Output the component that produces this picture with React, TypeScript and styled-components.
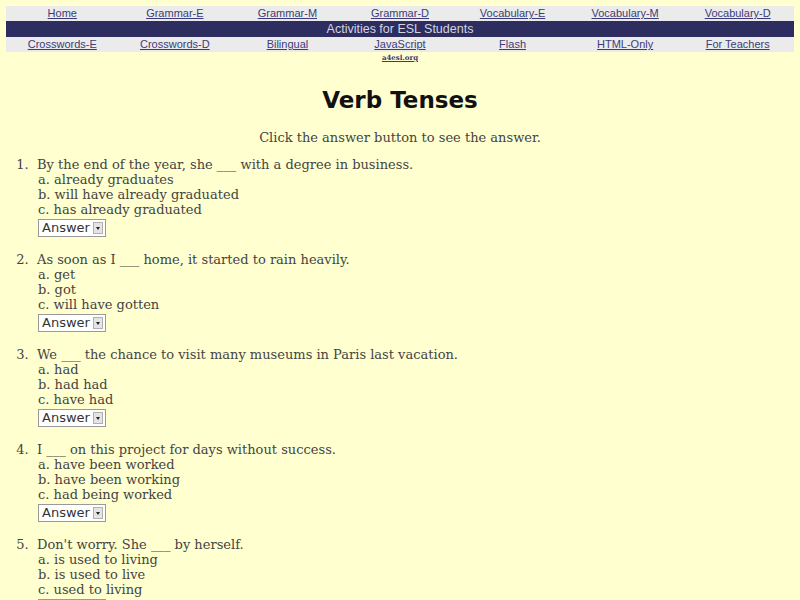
import React from 'react';
import styled, { createGlobalStyle } from 'styled-components';

const GlobalStyle = createGlobalStyle`
  html, body {
    margin: 0;
    padding: 0;
    background: #ffffcf;
  }
  body {
    padding: 6px 6px 0 6px;
    font-family: "DejaVu Serif", serif;
  }
`;

const topLinks = ['Home', 'Grammar-E', 'Grammar-M', 'Grammar-D', 'Vocabulary-E', 'Vocabulary-M', 'Vocabulary-D'];
const bottomLinks = ['Crosswords-E', 'Crosswords-D', 'Bilingual', 'JavaScript', 'Flash', 'HTML-Only', 'For Teachers'];

interface Question {
  text: string;
  options: string[];
}

const questions: Question[] = [
  {
    text: 'By the end of the year, she ___ with a degree in business.',
    options: ['already graduates', 'will have already graduated', 'has already graduated'],
  },
  {
    text: 'As soon as I ___ home, it started to rain heavily.',
    options: ['get', 'got', 'will have gotten'],
  },
  {
    text: 'We ___ the chance to visit many museums in Paris last vacation.',
    options: ['had', 'had had', 'have had'],
  },
  {
    text: 'I ___ on this project for days without success.',
    options: ['have been worked', 'have been working', 'had being worked'],
  },
  {
    text: "Don't worry. She ___ by herself.",
    options: ['is used to living', 'is used to live', 'used to living'],
  },
];

const NavTable = styled.div`
  display: flex;
  flex-direction: column;
  width: 100%;
`;

const LinkRow = styled.div`
  display: grid;
  grid-template-columns: repeat(7, 1fr);
  background: #ebebeb;
  height: 15px;
  align-items: center;
`;

const NavCell = styled.div`
  text-align: center;
  font-family: "Liberation Sans", Arial, sans-serif;
  font-size: 11px;
  line-height: 15px;
`;

const NavLink = styled.a`
  color: #3c3c78;
  text-decoration: underline;
`;

const Banner = styled.div`
  background: #2d2d5f;
  color: #d4d4e0;
  text-align: center;
  font-family: "Liberation Sans", Arial, sans-serif;
  font-size: 12.5px;
  height: 16px;
  line-height: 16px;
`;

const SiteRow = styled.div`
  display: grid;
  grid-template-columns: repeat(7, 1fr);
  margin-top: 1px;
`;

const SiteLink = styled.a`
  grid-column: 4;
  text-align: center;
  font-family: "DejaVu Serif", serif;
  font-size: 7px;
  font-weight: bold;
  color: #3c3c78;
  text-decoration: underline;
  line-height: 9px;
`;

const Title = styled.h1`
  margin: 22px 0 0 0;
  text-align: center;
  font-family: "DejaVu Sans", sans-serif;
  font-size: 23px;
  font-weight: bold;
  color: #111;
  line-height: 32px;
`;

const Intro = styled.p`
  margin: 14px 0 0 0;
  text-align: center;
  font-size: 13px;
  color: #444;
  line-height: 16px;
`;

const QuizList = styled.ol`
  margin: 11px 0 0 0;
  padding-left: 31px;
  color: #444;
  font-size: 13px;
  line-height: 15px;
`;

const QuizItem = styled.li`
  margin-bottom: 15px;
  &::marker {
    content: counter(list-item) ".\\00a0\\00a0";
  }
`;

const OptionLine = styled.div`
  padding-left: 1px;
`;

const AnswerBox = styled.div`
  display: inline-flex;
  align-items: center;
  justify-content: space-between;
  box-sizing: border-box;
  width: 68px;
  height: 18px;
  margin: 2px 0 0 1px;
  padding: 0 2px 0 3px;
  background: #fff;
  border: 1px solid #9a9a9a;
  font-family: "DejaVu Sans", sans-serif;
  font-size: 13px;
  color: #333;
  line-height: 16px;
`;

const Arrow = styled.span`
  display: inline-flex;
  align-items: center;
  justify-content: center;
  width: 10px;
  height: 12px;
  background: #e4e4e4;
  border: 1px solid #b0b0b0;
  box-sizing: border-box;
  &::after {
    content: '';
    border-left: 2.5px solid transparent;
    border-right: 2.5px solid transparent;
    border-top: 3px solid #222;
  }
`;

export default function App() {
  return (
    <>
      <GlobalStyle />
      <NavTable>
        <LinkRow>
          {topLinks.map(l => (
            <NavCell key={l}>
              <NavLink href="#">{l}</NavLink>
            </NavCell>
          ))}
        </LinkRow>
        <Banner>Activities for ESL Students</Banner>
        <LinkRow>
          {bottomLinks.map(l => (
            <NavCell key={l}>
              <NavLink href="#">{l}</NavLink>
            </NavCell>
          ))}
        </LinkRow>
        <SiteRow>
          <SiteLink href="#">a4esl.org</SiteLink>
        </SiteRow>
      </NavTable>
      <Title>Verb Tenses</Title>
      <Intro>Click the answer button to see the answer.</Intro>
      <QuizList>
        {questions.map((q, i) => (
          <QuizItem key={i}>
            {q.text}
            {q.options.map((o, j) => (
              <OptionLine key={j}>
                {String.fromCharCode(97 + j)}. {o}
              </OptionLine>
            ))}
            <AnswerBox>
              Answer
              <Arrow />
            </AnswerBox>
          </QuizItem>
        ))}
      </QuizList>
    </>
  );
}
